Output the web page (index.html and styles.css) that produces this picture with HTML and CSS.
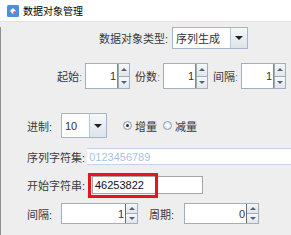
FILE: index.html
```html
<!DOCTYPE html>
<html lang="zh-CN">
<head>
  <meta charset="UTF-8">
  <title>数据对象管理</title>
  <link rel="stylesheet" href="styles.css">
</head>
<body>
<div class="window">
  <div class="titlebar">
    <svg class="app-icon" width="12" height="12" viewBox="0 0 12 12">
      <rect x="0" y="0" width="12" height="12" rx="1.5" fill="#4a90e2"/>
      <path d="M3 6 L6 3 L9 6 L6 9 Z" fill="#ffffff"/>
      <circle cx="7.5" cy="7.5" r="1.3" fill="#e8553a"/>
    </svg>
    <span class="title">数据对象管理</span>
  </div>

  <div class="content">
    <div class="row row-type">
      <span class="label">数据对象类型:</span>
      <div class="combo combo-type">
        <span class="combo-text">序列生成</span>
        <span class="combo-btn"><i class="tri-down"></i></span>
      </div>
    </div>

    <div class="row row-start">
      <span class="label lbl-short">起始<b>:</b></span>
      <div class="spinner sp-top">
        <span class="sp-value">1</span>
        <span class="sp-btns"><span class="half"><i class="tri-up"></i></span><span class="half"><i class="tri-down small"></i></span></span>
      </div>
      <span class="label lbl-short">份数<b>:</b></span>
      <div class="spinner sp-top">
        <span class="sp-value">1</span>
        <span class="sp-btns"><span class="half"><i class="tri-up"></i></span><span class="half"><i class="tri-down small"></i></span></span>
      </div>
      <span class="label lbl-short">间隔<b>:</b></span>
      <div class="spinner sp-top">
        <span class="sp-value">1</span>
        <span class="sp-btns"><span class="half"><i class="tri-up"></i></span><span class="half"><i class="tri-down small"></i></span></span>
      </div>
    </div>

    <div class="row row-base">
      <span class="label lbl-col">进制:</span>
      <div class="combo combo-base">
        <span class="combo-text">10</span>
        <span class="combo-btn"><i class="tri-down"></i></span>
      </div>
      <label class="radio"><span class="dot on"></span>增量</label>
      <label class="radio"><span class="dot"></span>减量</label>
    </div>

    <div class="row row-charset">
      <span class="label lbl-wide">序列字符集:</span>
      <div class="field field-charset">0123456789</div>
    </div>

    <div class="row row-begin">
      <span class="label lbl-wide">开始字符串:</span>
      <div class="field field-begin">46253822</div>
      <div class="highlight"></div>
    </div>

    <div class="row row-step">
      <span class="label lbl-col">间隔:</span>
      <div class="spinner sp-low sp-step">
        <span class="sp-value">1</span>
        <span class="sp-btns"><span class="half"><i class="tri-up"></i></span><span class="half"><i class="tri-down small"></i></span></span>
      </div>
      <span class="label lbl-period">周期:</span>
      <div class="spinner sp-low sp-period">
        <span class="sp-value">0</span>
        <span class="sp-btns"><span class="half"><i class="tri-up"></i></span><span class="half"><i class="tri-down small"></i></span></span>
      </div>
    </div>
  </div>
</div>
</body>
</html>
```

FILE: styles.css
```css
body {
  margin: 0;
  font-family: "Liberation Sans", "Noto Sans CJK SC", sans-serif;
  font-size: 11px;
  color: #333333;
  background: #eeeeee;
}
.window {
  width: 291px;
  height: 235px;
  overflow: hidden;
}
.titlebar {
  height: 22px;
  background: #ffffff;
  display: flex;
  align-items: center;
  border-bottom: 1px solid #e2e2e2;
  box-sizing: border-box;
}
.app-icon {
  margin-left: 7px;
  margin-right: 4px;
}
.title {
  font-size: 10px;
  color: #000000;
}
.content {
  height: 213px;
  border-left: 1px solid #8f8f8f;
  background: #eeeeee;
  position: relative;
}
.row {
  display: flex;
  align-items: center;
}
.label {
  white-space: nowrap;
  color: #3a3a3a;
}
.label b {
  font-weight: normal;
  color: #6d8bb0;
}

/* row 1 */
.row-type {
  margin-top: 5px;
  padding-left: 98px;
}
.row-type .label {
  margin-right: 4px;
}
.combo {
  display: flex;
  background: #ffffff;
  border: 1px solid #a3b6cc;
  box-sizing: border-box;
}
.combo-type {
  width: 76px;
  height: 22px;
}
.combo-text {
  flex: 1;
  display: flex;
  align-items: center;
  padding-left: 3px;
}
.combo-btn {
  width: 16px;
  border-left: 1px solid #b8c7d8;
  background: linear-gradient(#f6f8fa, #dde4ec);
  display: flex;
  align-items: center;
  justify-content: center;
}
.tri-down {
  width: 0;
  height: 0;
  border-left: 4px solid transparent;
  border-right: 4px solid transparent;
  border-top: 4px solid #202020;
}
.tri-down.small {
  border-left-width: 3px;
  border-right-width: 3px;
  border-top: 3px solid #556070;
}
.tri-up {
  width: 0;
  height: 0;
  border-left: 3px solid transparent;
  border-right: 3px solid transparent;
  border-bottom: 3px solid #556070;
}

/* spinners */
.row-start {
  margin-top: 14px;
  padding-left: 56px;
}
.lbl-short {
  width: 28px;
}
.spinner {
  display: flex;
  background: #ffffff;
  border: 1px solid #a3aebb;
  box-sizing: border-box;
}
.sp-top {
  width: 46px;
  height: 26px;
  margin-right: 5px;
}
.sp-value {
  flex: 1;
  display: flex;
  align-items: center;
  justify-content: flex-end;
  padding-right: 1px;
  border-right: 1px solid #5b8fd6;
}
.sp-btns {
  width: 10px;
  display: flex;
  flex-direction: column;
  border-left: 1px solid #a3aebb;
}
.half {
  flex: 1;
  display: flex;
  align-items: center;
  justify-content: center;
  background: linear-gradient(#f6f8fa, #e1e6ec);
}
.half + .half {
  border-top: 1px solid #a3aebb;
}

/* row 3 */
.row-base {
  margin-top: 24px;
  padding-left: 26px;
}
.lbl-col {
  width: 34px;
}
.combo-base {
  width: 46px;
  height: 25px;
  margin-right: 16px;
}
.radio {
  display: flex;
  align-items: center;
  margin-right: 6px;
  color: #3a3a3a;
}
.dot {
  width: 9px;
  height: 9px;
  border-radius: 50%;
  border: 1px solid #8a9bb0;
  background: radial-gradient(#ffffff, #d6e0eb);
  margin-right: 3px;
  box-sizing: border-box;
  position: relative;
}
.dot.on::after {
  content: "";
  position: absolute;
  left: 2px;
  top: 2px;
  width: 3px;
  height: 3px;
  border-radius: 50%;
  background: #333333;
}

/* row 4 and 5 */
.row-charset {
  margin-top: 10px;
  padding-left: 26px;
}
.lbl-wide {
  width: 65px;
}
.field {
  background: #ffffff;
  box-sizing: border-box;
  display: flex;
  align-items: center;
  padding-left: 2px;
}
.field-charset {
  width: 220px;
  height: 17px;
  border-top: 1px solid #c5d5e6;
  border-bottom: 1px solid #c5d5e6;
  color: #a9c3df;
}
.row-begin {
  margin-top: 11px;
  padding-left: 26px;
  position: relative;
}
.field-begin {
  width: 111px;
  height: 18px;
  border: 1px solid #a5a5a5;
  color: #111111;
}
.highlight {
  position: absolute;
  left: 87px;
  top: -3px;
  width: 70px;
  height: 25px;
  border: 3px solid #e8141b;
  box-sizing: border-box;
}

/* row 6 */
.row-step {
  margin-top: 9px;
  padding-left: 26px;
}
.sp-low {
  height: 21px;
}
.sp-step {
  width: 77px;
}
.lbl-period {
  margin-left: 11px;
  width: 35px;
}
.sp-period {
  width: 75px;
}
.sp-low .sp-value {
  border-right: 1px solid #6b6b6b;
}
.sp-low .sp-btns {
  width: 11px;
  border-left: none;
}
```
